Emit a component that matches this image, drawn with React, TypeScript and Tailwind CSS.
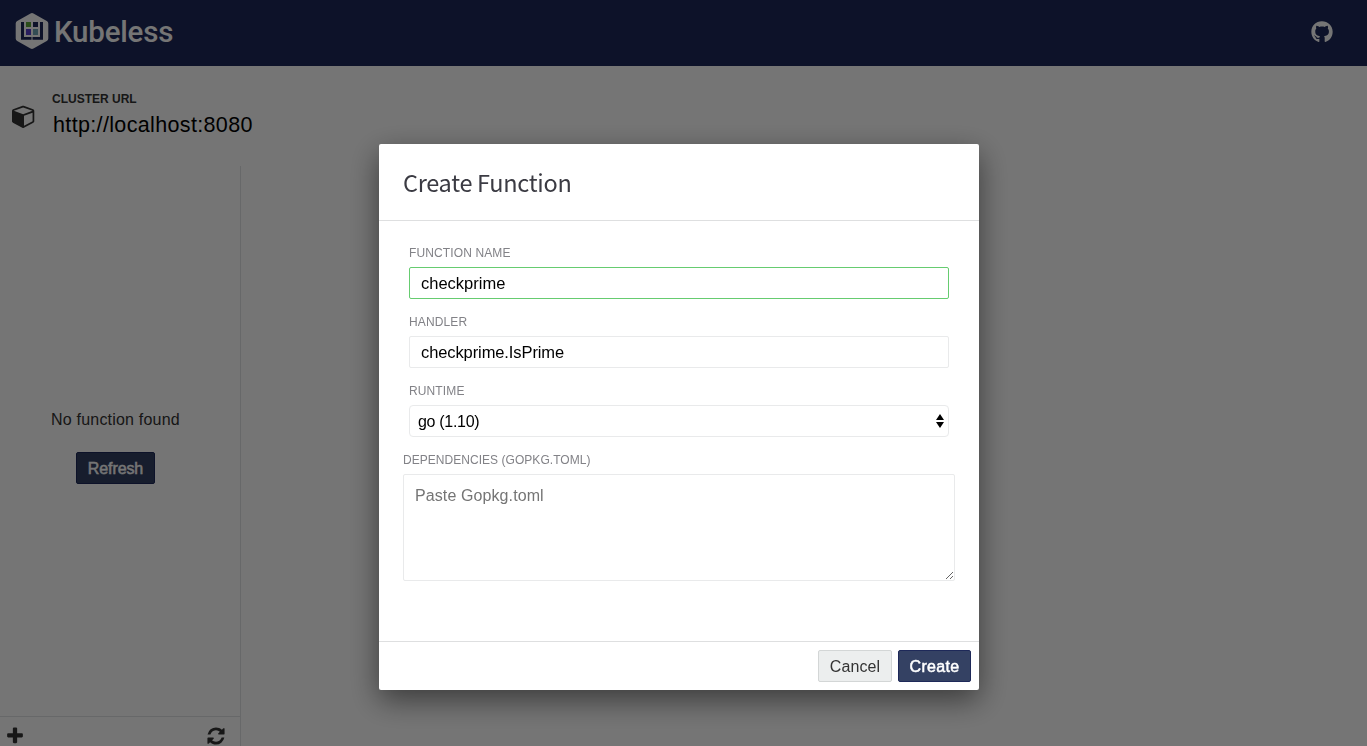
import type { ReactNode } from 'react';
import { FaGithub } from 'react-icons/fa';

const CUBE =
  'M896 1629l640-349v-636l-640 233v752zm-64-865l698-254-698-254-698 254zm832-252v768q0 35-18 65t-49 47l-704 384q-28 16-61 16t-61-16l-704-384q-31-17-49-47t-18-65v-768q0-40 23-73t61-47l704-256q22-8 44-8t44 8l704 256q38 14 61 47t23 73z';
const PLUS =
  'M1600 736v192q0 40-28 68t-68 28h-416v416q0 40-28 68t-68 28h-192q-40 0-68-28t-28-68v-416h-416q-40 0-68-28t-28-68v-192q0-40 28-68t68-28h416v-416q0-40 28-68t68-28h192q40 0 68 28t28 68v416h416q40 0 68 28t28 68z';
const REFRESH =
  'M1639 1056q0 5-1 7-64 268-268 434.5t-478 166.5q-146 0-282.5-55t-243.5-157l-129 129q-19 19-45 19t-45-19-19-45v-448q0-26 19-45t45-19h448q26 0 45 19t19 45-19 45l-137 137q71 66 161 102t187 36q134 0 250-65t186-179q11-17 53-117 8-23 30-23h192q13 0 22.5 9.5t9.5 22.5zm25-800v448q0 26-19 45t-45 19h-448q-26 0-45-19t-19-45 19-45l138-138q-148-137-349-137-134 0-250 65t-186 179q-11 17-53 117-8 23-30 23h-199q-13 0-22.5-9.5t-9.5-22.5v-7q65-268 270-434.5t480-166.5q146 0 284 55.5t245 156.5l130-129q19-19 45-19t45 19 19 45z';

function Icon({ d, className }: { d: string; className: string }) {
  return (
    <svg viewBox="0 0 1792 1792" className={className} fill="currentColor" aria-hidden="true">
      <path d={d} />
    </svg>
  );
}

function Logo() {
  return (
    <svg viewBox="0 0 34 38" className="h-[38px] w-[34px]" aria-hidden="true">
      <path
        d="M17 4 30.3 11.5V26.5L17 34 3.7 26.5V11.5Z"
        fill="#fff"
        stroke="#fff"
        strokeWidth="6"
        strokeLinejoin="round"
      />
      <path d="M6 10h3v15h16V10h3v17.8H6z" fill="#1e2959" />
      <path d="M16.5 23h1v5h-1z" fill="#fff" />
      <path d="M11 10h5v5h-5z" fill="#5fa83a" />
      <path d="M18 10h5v5h-5z" fill="#1e2959" />
      <path d="M11 17h5v6h-5z" fill="#5a3fd0" />
      <path d="M18 17h5v6h-5z" fill="#6fa6b8" />
    </svg>
  );
}

function Field({ label, children }: { label: string; children: ReactNode }) {
  return (
    <label className="flex h-[69px] flex-col px-1.5">
      <span className="mb-1.5 h-4 text-[12px] leading-4 tracking-[0.12px] text-[#828287]">{label}</span>
      {children}
    </label>
  );
}

export default function App() {
  return (
    <div
      className="flex h-[746px] w-[1367px] flex-col overflow-hidden bg-white text-[16px] text-[#333]"
      style={{ fontFamily: '"Liberation Sans", Arial, sans-serif' }}
    >
      <header className="flex h-[66px] shrink-0 items-center justify-between bg-[#1e2959] pr-[34px] pl-[15px] text-white">
        <div className="flex items-center gap-[5px] pb-1">
          <Logo />
          <span className="pt-0.5 font-['Roboto'] text-[29.5px] leading-9 font-medium tracking-[-0.2px]">Kubeless</span>
        </div>
        <FaGithub className="mb-0.5 size-[22px]" />
      </header>

      <section className="flex h-[100px] shrink-0 items-start pl-3">
        <Icon d={CUBE} className="mt-[38px] size-6" />
        <div className="ml-4 pt-6">
          <div className="text-[12px] leading-[18px] font-bold">CLUSTER URL</div>
          <div className="pl-px text-[21.5px] leading-[34px] tracking-[0.35px] text-black">http://localhost:8080</div>
        </div>
      </section>

      <aside className="flex w-[241px] grow flex-col border-r border-[#e1e2e5]">
        <div className="flex h-[550px] flex-col items-center pt-[244px] pr-[9px]">
          <p className="leading-5 tracking-[0.2px]">No function found</p>
          <button className="mt-[22px] h-8 w-[79px] rounded-[2px] border border-[#1e2959] bg-[#344163] pt-0.5 text-[16px] tracking-[-0.1px] text-white [-webkit-text-stroke:0.5px_white]">
            Refresh
          </button>
        </div>
        <div className="flex h-[30px] shrink-0 items-start justify-between border-t border-[#e1e2e5] pr-[14px] pl-[5px]">
          <Icon d={PLUS} className="mt-[9px] size-5" />
          <Icon d={REFRESH} className="mt-[9px] size-5" />
        </div>
      </aside>

      <div className="fixed inset-0 flex items-start justify-center bg-black/54 pt-36 pr-[9px]">
        <div className="flex h-[546px] w-[600px] flex-col rounded-[2px] bg-white shadow-[0_10px_30px_rgba(0,0,0,0.5)]">
          <div className="h-[77px] border-b border-[#dedfe0] px-6 pt-[22px]">
            <h2 className="font-['Noto_Sans_CJK_JP'] text-[23.5px] leading-8 tracking-[-0.3px] text-[#3b3b43]">
              Create Function
            </h2>
          </div>

          <form className="flex grow flex-col px-6 pt-6 text-black">
            <Field label="FUNCTION NAME">
              <input
                className="h-8 w-full rounded-[2px] border border-[#66cc70] px-[11px] text-[16.5px] outline-none"
                defaultValue="checkprime"
              />
            </Field>
            <Field label="HANDLER">
              <input
                className="h-8 w-full rounded-[2px] border border-[#e9eaeb] px-[11px] text-[16.5px] tracking-[-0.1px] outline-none"
                defaultValue="checkprime.IsPrime"
              />
            </Field>
            <Field label="RUNTIME">
              <div className="flex h-8 items-center rounded-[4px] border border-[#e9eaeb] pr-1 pl-2">
                <select className="grow appearance-none pt-0.5 text-[16px] tracking-[-0.3px] outline-none">
                  <option>go (1.10)</option>
                </select>
                <svg viewBox="0 0 8 16" className="h-4 w-2" aria-hidden="true">
                  <path d="M4 1 8 7H0zM4 15 0 9h8z" />
                </svg>
              </div>
            </Field>
            <label className="flex flex-col">
              <span className="mb-1.5 h-4 text-[12px] leading-4 tracking-[0.04px] text-[#828287]">
                DEPENDENCIES (GOPKG.TOML)
              </span>
              <textarea
                className="h-[107px] w-full resize rounded-[2px] border border-[#e9eaeb] px-[11px] pt-[9px] text-[16px] leading-6 tracking-[0.1px] outline-none placeholder:text-[#757575]"
                placeholder="Paste Gopkg.toml"
              />
            </label>
          </form>

          <div className="flex h-[49px] justify-end gap-1.5 border-t border-[#dedfe0] px-2 pt-2">
            <button className="h-8 w-[74px] rounded-[2px] border border-[#d3d6d6] bg-[#eceeee] pt-0.5 text-[16px] tracking-[0.1px] text-[#333]">
              Cancel
            </button>
            <button className="h-8 w-[73px] rounded-[2px] border border-[#1e2959] bg-[#344163] pt-0.5 text-[16px] tracking-[0.3px] text-white [-webkit-text-stroke:0.5px_white]">
              Create
            </button>
          </div>
        </div>
      </div>
    </div>
  );
}
